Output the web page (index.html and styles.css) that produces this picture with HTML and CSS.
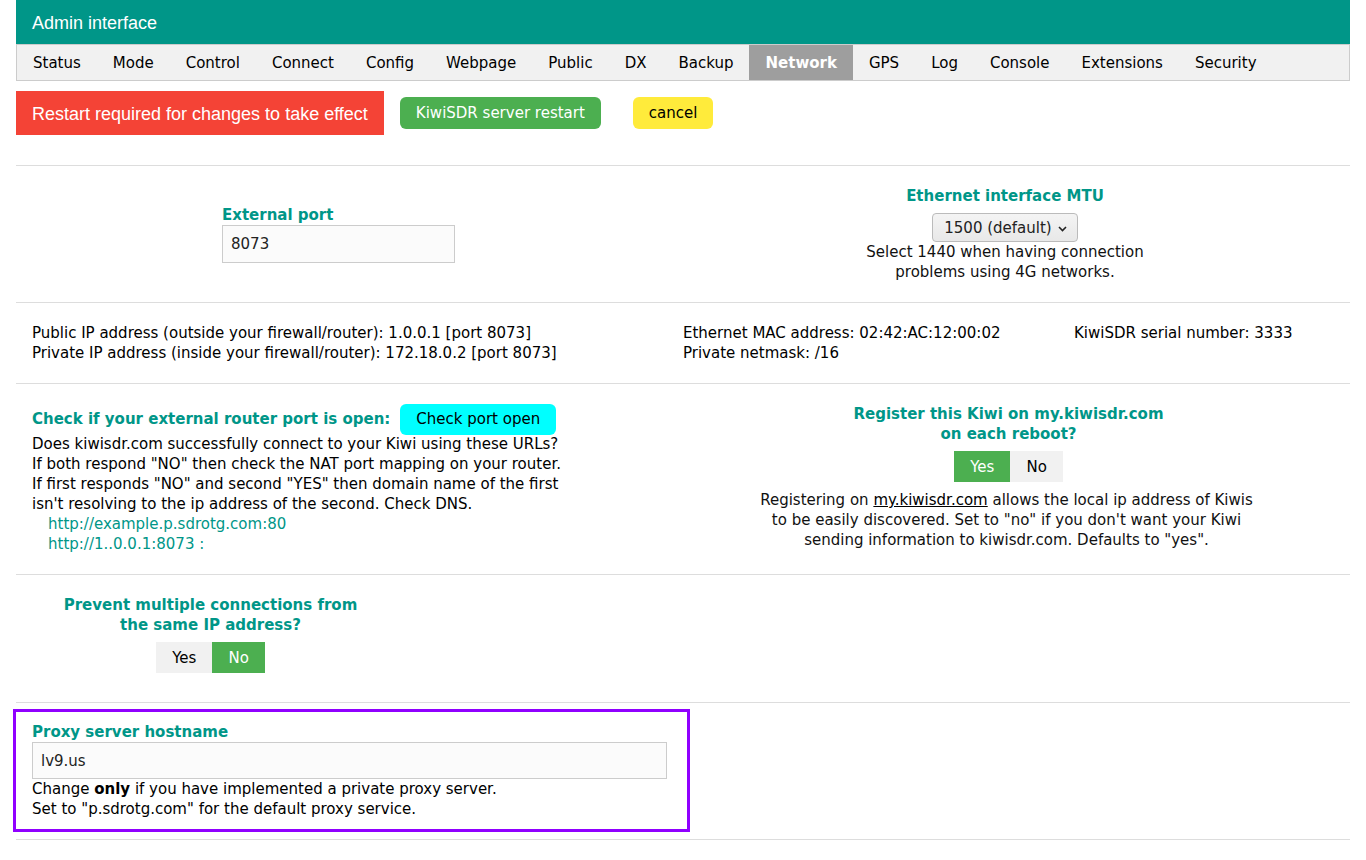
FILE: index.html
```html
<!DOCTYPE html>
<html lang="en">
<head>
<meta charset="utf-8">
<title>Admin interface</title>
<link rel="stylesheet" href="styles.css">
</head>
<body>
<div class="page">
  <header class="topbar">Admin interface</header>
  <nav class="tabs">
    <span class="tab">Status</span>
    <span class="tab">Mode</span>
    <span class="tab">Control</span>
    <span class="tab">Connect</span>
    <span class="tab">Config</span>
    <span class="tab">Webpage</span>
    <span class="tab">Public</span>
    <span class="tab">DX</span>
    <span class="tab">Backup</span>
    <span class="tab tab-active">Network</span>
    <span class="tab">GPS</span>
    <span class="tab">Log</span>
    <span class="tab">Console</span>
    <span class="tab">Extensions</span>
    <span class="tab">Security</span>
  </nav>

  <div class="restart-row">
    <div class="restart-msg">Restart required for changes to take effect</div>
    <button class="btn btn-green">KiwiSDR server restart</button>
    <button class="btn btn-yellow">cancel</button>
  </div>

  <hr class="sep sep-first">

  <section class="sec sec-port">
    <div class="port-col">
      <div class="label">External port</div>
      <div class="input input-port">8073</div>
    </div>
    <div class="mtu-col">
      <div class="label">Ethernet interface MTU</div>
      <div class="select">
        <span>1500 (default)</span>
        <svg class="chev" width="9" height="6" viewBox="0 0 9 6"><path d="M1 1 L4.5 4.5 L8 1" fill="none" stroke="#222" stroke-width="1.6"/></svg>
      </div>
      <div class="note">Select 1440 when having connection<br>problems using 4G networks.</div>
    </div>
  </section>

  <hr class="sep">

  <section class="sec sec-info">
    <div class="info-a">Public IP address (outside your firewall/router): 1.0.0.1 [port 8073]<br>Private IP address (inside your firewall/router): 172.18.0.2 [port 8073]</div>
    <div class="info-b">Ethernet MAC address: 02:42:AC:12:00:02<br>Private netmask: /16</div>
    <div class="info-c">KiwiSDR serial number: 3333</div>
  </section>

  <hr class="sep">

  <section class="sec sec-check">
    <div class="check-col">
      <div class="check-head">
        <span class="label">Check if your external router port is open:</span>
        <button class="btn btn-aqua">Check port open</button>
      </div>
      <div>Does kiwisdr.com successfully connect to your Kiwi using these URLs?<br>If both respond "NO" then check the NAT port mapping on your router.<br>If first responds "NO" and second "YES" then domain name of the first<br>isn't resolving to the ip address of the second. Check DNS.</div>
      <div class="url">http://example.p.sdrotg.com:80</div>
      <div class="url">http://1..0.0.1:8073 :</div>
    </div>
    <div class="reg-col">
      <div class="label">Register this Kiwi on my.kiwisdr.com<br>on each reboot?</div>
      <div class="toggle">
        <span class="tg tg-on">Yes</span><span class="tg">No</span>
      </div>
      <div class="note reg-note">Registering on <a class="link" href="#">my.kiwisdr.com</a> allows the local ip address of Kiwis<br>to be easily discovered. Set to "no" if you don't want your Kiwi<br>sending information to kiwisdr.com. Defaults to "yes".</div>
    </div>
  </section>

  <hr class="sep">

  <section class="sec sec-multi">
    <div class="multi-col">
      <div class="label">Prevent multiple connections from<br>the same IP address?</div>
      <div class="toggle">
        <span class="tg">Yes</span><span class="tg tg-on">No</span>
      </div>
    </div>
  </section>

  <hr class="sep">

  <section class="proxy-box">
    <div class="label">Proxy server hostname</div>
    <div class="input input-proxy">lv9.us</div>
    <div>Change <b>only</b> if you have implemented a private proxy server.<br>Set to "p.sdrotg.com" for the default proxy service.</div>
  </section>

  <hr class="sep">
</div>
</body>
</html>
```

FILE: styles.css
```css
html, body {
  margin: 0;
  padding: 0;
  background: #fff;
}

body {
  font-family: "DejaVu Sans", "Noto Sans", sans-serif;
  font-size: 15px;
  line-height: 20px;
  color: #000;
}

.page {
  margin: 0 16px;
}

.topbar {
  box-sizing: border-box;
  height: 44px;
  line-height: 42px;
  padding: 2px 0 0 16px;
  background: #009688;
  color: #fff;
  font-family: "Liberation Sans", Arial, sans-serif;
  font-size: 18px;
}

.tabs {
  display: flex;
  background: #f1f1f1;
  border: 1px solid #ccc;
  height: 35px;
}

.tab {
  padding: 2px 16px 0;
  line-height: 33px;
  color: #000;
}

.tab-active {
  background: #9e9e9e;
  color: #fff;
  font-weight: bold;
}

.restart-row {
  display: flex;
  align-items: center;
  margin-top: 10px;
  height: 44px;
}

.restart-msg {
  box-sizing: border-box;
  height: 44px;
  line-height: 42px;
  padding: 2px 16px 0;
  background: #f44336;
  color: #fff;
  font-family: "Liberation Sans", Arial, sans-serif;
  font-size: 18px;
  margin-right: 16px;
}

.btn {
  font-family: "DejaVu Sans", sans-serif;
  font-size: 15px;
  border: none;
  padding: 0 16px;
  height: 32px;
  line-height: 32px;
  border-radius: 6px;
  cursor: pointer;
}

.btn-green {
  background: #4caf50;
  color: #fff;
  margin-right: 32px;
}

.btn-yellow {
  background: #ffeb3b;
  color: #000;
}

.btn-aqua {
  background: #00ffff;
  color: #000;
  height: 31px;
  line-height: 31px;
  margin-left: 10px;
  margin-top: 1px;
}

.sep {
  border: none;
  border-top: 1px solid #ddd;
  margin: 0;
}

.sep-first {
  margin-top: 30px;
}

.label {
  color: #009688;
  font-weight: bold;
}

.sec {
  display: grid;
}

.sec-port {
  grid-template-columns: 667px 644px;
  align-items: center;
  padding: 20px 0 20px;
}

.port-col {
  padding-left: 206px;
}

.input {
  box-sizing: border-box;
  border: 1px solid #ccc;
  background: #fbfbfb;
  color: #222;
  padding: 0 8px;
}

.input-port {
  width: 233px;
  height: 38px;
  line-height: 37px;
}

.mtu-col {
  display: flex;
  flex-direction: column;
  align-items: center;
  text-align: center;
}

.select {
  display: flex;
  align-items: center;
  gap: 6px;
  box-sizing: border-box;
  height: 29px;
  margin-top: 7px;
  padding: 1px 10px 0 11px;
  border: 1px solid #bbb;
  border-radius: 4px;
  background: linear-gradient(#f4f4f4, #e8e8e8);
  color: #222;
}

.chev {
  display: block;
  margin-top: 1px;
}

.note {
  color: #111;
}

.sec-info {
  grid-template-columns: 667px 391px 1fr;
  padding: 20px 0 20px;
}

.info-a {
  padding-left: 16px;
}

.sec-check {
  grid-template-columns: 667px 651px;
  align-items: start;
  padding: 20px 0 20px;
}

.check-col {
  padding-left: 16px;
}

.check-head {
  display: flex;
  align-items: center;
  height: 30px;
}

.url {
  padding-left: 16px;
  color: #009688;
}

.reg-col {
  display: flex;
  flex-direction: column;
  align-items: center;
  text-align: center;
}

.reg-note {
  padding-right: 4px;
}

.toggle {
  display: flex;
  margin-top: 7px;
  margin-bottom: 8px;
}

.tg {
  height: 31px;
  line-height: 32px;
  padding: 0 16px;
  background: #f1f1f1;
  color: #000;
}

.tg-on {
  background: #4caf50;
  color: #fff;
}

.link {
  color: #000;
  text-decoration: underline;
}

.sec-multi {
  grid-template-columns: 389px;
  padding: 20px 0 29px;
}

.multi-col {
  display: flex;
  flex-direction: column;
  align-items: center;
  text-align: center;
}

.multi-col .toggle {
  margin-bottom: 0;
}

.proxy-box {
  width: 671px;
  box-sizing: border-box;
  margin: 9px 0 10px;
  padding: 10px 20px 10px 16px;
  outline: 3px solid #9000ff;
}

.input-proxy {
  width: 100%;
  height: 37px;
  line-height: 37px;
}
```
